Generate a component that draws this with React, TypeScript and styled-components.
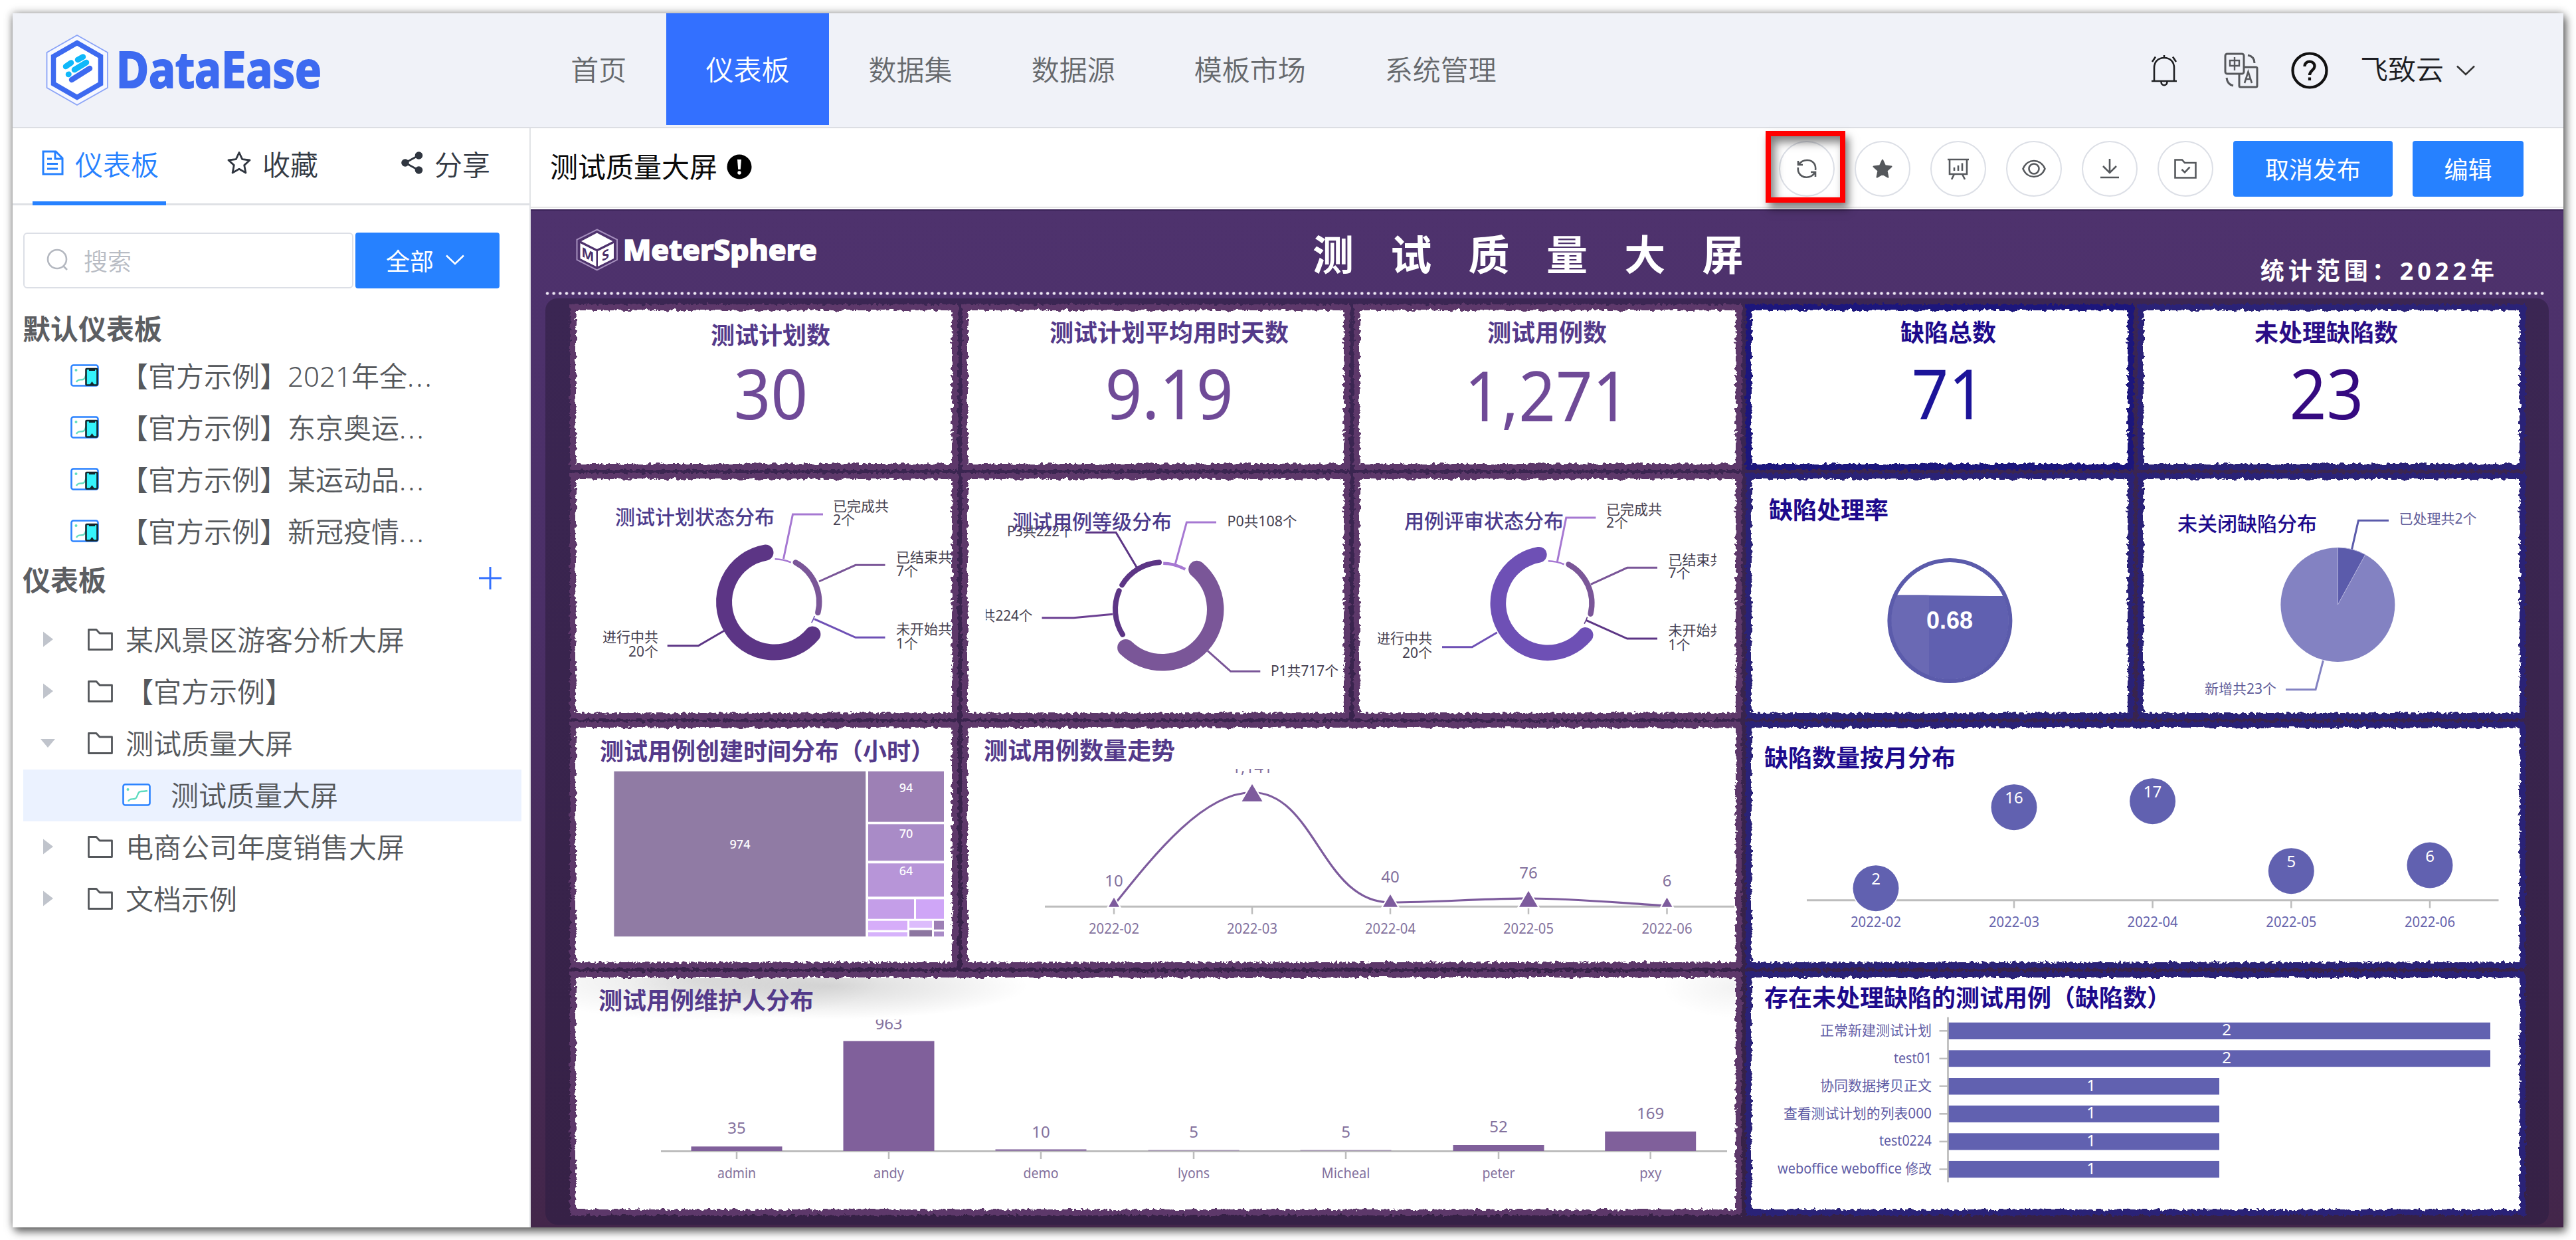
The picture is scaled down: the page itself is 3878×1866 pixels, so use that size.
import React from "react";
import styled, { createGlobalStyle } from "styled-components";

const FONT = `"Noto Sans", "Noto Sans CJK SC", sans-serif`;

const Global = createGlobalStyle`
  * { box-sizing: border-box; }
  body { margin: 0; background: #fff; font-family: ${FONT}; }
`;

/* ---------- frame ---------- */

const Page = styled.div`
  width: 3878px;
  height: 1866px;
  padding: 20px 19px 19px;
  overflow: hidden;
  background: #fff;
`;
const Frame = styled.div`
  width: 3840px;
  height: 1827px;
  display: flex;
  flex-direction: column;
  background: #fff;
  box-shadow: 0 0 12px rgba(0, 0, 0, 0.4), 4px 7px 12px rgba(0, 0, 0, 0.5);
`;
const Header = styled.header`
  height: 173px;
  flex: none;
  display: flex;
  align-items: center;
  padding: 0 133px 0 51px;
  background: #f0f2f8;
  border-bottom: 2px solid #dcdee3;
`;
const Nav = styled.nav`
  display: flex;
  align-self: flex-start;
  margin-left: 310px;
`;
const NavItem = styled.a<{ $active?: boolean }>`
  height: 168px;
  padding: 0 59.8px 4px 59.3px;
  display: flex;
  align-items: center;
  font-size: 42px;
  font-weight: 350;
  color: ${(p) => (p.$active ? "#fff" : "#66696d")};
  background: ${(p) => (p.$active ? "#3370ff" : "transparent")};
`;
const HeaderTools = styled.div`
  margin-left: auto;
  display: flex;
  align-items: center;
`;
const Tool = styled.span<{ $gap?: number }>`
  display: flex;
  margin-left: ${(p) => p.$gap ?? 0}px;
`;
const UserName = styled.span`
  margin: 0 0 4px 48px;
  font-size: 42px;
  font-weight: 350;
  line-height: 60px;
  color: #1c1d22;
`;
const Body = styled.div`
  flex: 1;
  min-height: 0;
  display: flex;
`;

/* ---------- sidebar ---------- */

const Sidebar = styled.aside`
  width: 780px;
  flex: none;
  border-right: 2px solid #e1e3e6;
`;
const Tabs = styled.div`
  height: 116px;
  display: flex;
  padding-left: 30px;
  border-bottom: 3px solid #dfe1e5;
`;
const Tab = styled.div<{ $active?: boolean; $gap?: number }>`
  height: 116px;
  display: flex;
  align-items: center;
  gap: 17px;
  margin-left: ${(p) => p.$gap ?? 0}px;
  padding: ${(p) => (p.$active ? "0 11px 6px 14px" : "0 0 6px")};
  border-bottom: 6px solid ${(p) => (p.$active ? "#2681ff" : "transparent")};
  font-size: 42px;
  font-weight: 350;
  color: ${(p) => (p.$active ? "#2681ff" : "#343a44")};
`;
const SearchRow = styled.div`
  display: flex;
  gap: 3px;
  margin: 41px 0 0 16px;
`;
const SearchBox = styled.div`
  width: 497px;
  height: 84px;
  padding: 0 0 2px 33px;
  display: flex;
  align-items: center;
  gap: 22px;
  border: 2px solid #dcdfe6;
  border-radius: 6px;
  font-size: 36px;
  font-weight: 350;
  color: #b8bcc4;
`;
const ScopeButton = styled.button`
  width: 217px;
  height: 84px;
  display: flex;
  align-items: center;
  justify-content: center;
  gap: 18px;
  padding: 0 7px 2px 0;
  border: 0;
  border-radius: 4px;
  background: #2681ff;
  color: #fff;
  font: 400 36px ${FONT};
`;
const GroupHead = styled.div<{ $top: number }>`
  display: flex;
  align-items: center;
  justify-content: space-between;
  height: 60px;
  margin: ${(p) => p.$top}px 41px 0 15px;
  font-size: 42px;
  font-weight: 700;
  color: #5c5e62;
`;
const List = styled.div<{ $top: number }>`
  margin: ${(p) => p.$top}px 12px 0 16px;
`;
const Row = styled.div<{ $indent: number; $selected?: boolean }>`
  height: 78px;
  display: flex;
  align-items: center;
  padding: 0 0 2px ${(p) => p.$indent}px;
  background: ${(p) => (p.$selected ? "#ebf2ff" : "transparent")};
  font-size: 42px;
  font-weight: 350;
  color: #55585c;
  white-space: nowrap;
`;
const RowText = styled.span<{ $gap: number }>`
  margin: 0 0 4px ${(p) => p.$gap}px;
`;
const Ellipsis = styled.span`
  letter-spacing: 3px;
`;
const CaretSlot = styled.span`
  width: 72px;
  flex: none;
  display: flex;
`;

/* ---------- workspace ---------- */

const Work = styled.main`
  flex: 1;
  min-width: 0;
  display: flex;
  flex-direction: column;
`;
const Toolbar = styled.div`
  height: 120px;
  flex: none;
  display: flex;
  align-items: center;
  padding: 3px 60px 0 29px;
  border-bottom: 2px solid #e6e6e6;
  margin-bottom: 2px;
`;
const BoardName = styled.span`
  font-size: 42px;
  font-weight: 400;
  line-height: 60px;
  color: #0a0a0a;
  margin: 0 14px 5px 0;
`;
const NameMark = styled.span`
  display: flex;
  margin-bottom: 5px;
`;
const Actions = styled.div`
  margin-left: auto;
  display: flex;
  gap: 30px;
`;
const RoundButton = styled.button`
  position: relative;
  width: 84px;
  height: 84px;
  padding: 0;
  display: flex;
  align-items: center;
  justify-content: center;
  border: 2px solid #dcdfe6;
  border-radius: 50%;
  background: #fff;
`;
const Highlight = styled.span`
  position: absolute;
  left: -22px;
  top: -17px;
  width: 120px;
  height: 108px;
  border: 8px solid #f00;
  box-shadow: 5px 9px 12px rgba(0, 0, 0, 0.5), inset 6px 9px 14px rgba(0, 0, 0, 0.5);
`;
const SolidButton = styled.button<{ $w: number }>`
  width: ${(p) => p.$w}px;
  height: 84px;
  border: 0;
  border-radius: 4px;
  background: #2681ff;
  color: #fff;
  font: 400 36px ${FONT};
`;

/* ---------- dashboard ---------- */

const Board = styled.section`
  flex: 1;
  padding: 0 22px 4px;
  display: flex;
  flex-direction: column;
  background: linear-gradient(#4e326d 0%, #4b2f67 40%, #43264a 100%);
  box-shadow: inset 0 2px 0 #3b2358;
`;
const Banner = styled.div`
  height: 124px;
  flex: none;
  display: flex;
  align-items: center;
  padding: 0 76px 0 47px;
`;
const BannerTitle = styled.h1`
  margin: 12px 0 0 744px;
  font-size: 62px;
  line-height: 80px;
  font-weight: 700;
  letter-spacing: 55.3px;
  color: #fff;
  white-space: nowrap;
`;
const Period = styled.span`
  margin: 61px 0 0 auto;
  font-size: 36px;
  line-height: 48px;
  font-weight: 700;
  letter-spacing: 6px;
  color: #fff;
  white-space: nowrap;
`;
const Dots = styled.div`
  height: 5px;
  flex: none;
  margin: 0 6px 5px 0;
  background: radial-gradient(circle at 3px 2.5px, #efe9f5 1.6px, rgba(239, 233, 245, 0) 2.8px) 0 0 / 9.66px 5px repeat-x;
`;
const Panel = styled.div`
  flex: 1;
  padding: 9px 36px 0 37px;
  border-radius: 18px;
  background: linear-gradient(#3b2653, #362146);
`;
const Grid = styled.div`
  display: grid;
  grid-template-columns: repeat(5, 584px);
  grid-template-rows: 249px 370px 371px 367px;
  column-gap: 6px;
  row-gap: 4.5px;
`;
const Card = styled.article<{ $tone: string; $span?: number }>`
  position: relative;
  z-index: 0;
  min-width: 0;
  display: grid;
  grid-template: 100% / 100%;
  grid-column: span ${(p) => p.$span ?? 1};
  &::before {
    content: "";
    position: absolute;
    z-index: -1;
    inset: 0;
    border: 9.5px solid ${(p) => p.$tone};
    background: #fff;
    filter: url(#torn);
  }
`;
const Smudge = styled.div`
  grid-area: 1 / 1;
  margin: 10px;
  background: radial-gradient(ellipse 300px 50px at 380px 12px, rgba(0, 0, 0, 0.15), rgba(0, 0, 0, 0.08) 50%, transparent),
    radial-gradient(ellipse 280px 60px at 180px 4px, rgba(0, 0, 0, 0.1), transparent),
    radial-gradient(ellipse 110px 46px at 100% 14px, rgba(0, 0, 0, 0.05), transparent);
`;
const CardTitle = styled.h2<{ $x: number; $y: number; $size?: number; $color: string; $weight?: number }>`
  grid-area: 1 / 1;
  justify-self: start;
  align-self: start;
  z-index: 1;
  margin: ${(p) => p.$y - 25}px 0 0 ${(p) => p.$x}px;
  font-size: ${(p) => p.$size ?? 36}px;
  line-height: 48px;
  font-weight: ${(p) => p.$weight ?? 700};
  color: ${(p) => p.$color};
  white-space: nowrap;
`;
const Chart = styled.svg`
  grid-area: 1 / 1;
  width: 100%;
  height: 100%;
  display: block;
`;
const Kpi = styled.div<{ $shift: number; $top: number }>`
  grid-area: 1 / 1;
  display: flex;
  flex-direction: column;
  align-items: center;
  padding: ${(p) => p.$top}px 0 0 0;
  margin-left: ${(p) => p.$shift * 2}px;
`;
const KpiLabel = styled.span<{ $color: string }>`
  font-size: 36px;
  line-height: 48px;
  font-weight: 700;
  color: ${(p) => p.$color};
  white-space: nowrap;
`;
const KpiValue = styled.span<{ $color: string; $gap: number }>`
  margin-top: ${(p) => p.$gap}px;
  font-size: 104px;
  line-height: 100px;
  font-weight: 400;
  transform: scaleX(0.935);
  color: ${(p) => p.$color};
`;

/* ---------- chart primitives ---------- */

const MAUVE = "#5d376a";
const NAVY = "#2b2277";

type LabelProps = {
  x: number;
  y: number;
  size?: number;
  fill?: string;
  anchor?: "start" | "middle" | "end";
  weight?: number;
  font?: string;
  width?: number;
  children: React.ReactNode;
};
const Label = ({ x, y, size = 21, fill = "#45404f", anchor = "start", weight = 400, font = FONT, width, children }: LabelProps) => (
  <text
    x={x}
    y={y + size * 0.365}
    fontSize={size}
    fill={fill}
    textAnchor={anchor}
    fontWeight={weight}
    fontFamily={font}
    textLength={width}
    lengthAdjust={width ? "spacingAndGlyphs" : undefined}
  >
    {children}
  </text>
);

const polar = (cx: number, cy: number, r: number, deg: number) => {
  const a = ((deg - 90) * Math.PI) / 180;
  return `${(cx + r * Math.cos(a)).toFixed(2)} ${(cy + r * Math.sin(a)).toFixed(2)}`;
};

const Ring = ({ cx, cy, inner, thick, from, to, color }: { cx: number; cy: number; inner: number; thick: number; from: number; to: number; color: string }) => {
  const r = inner + thick / 2;
  const pad = thick < 5 ? 1 : (Math.asin(thick / 2 / r) * 180) / Math.PI + 0.8;
  const a = from + pad;
  const b = to - pad;
  return (
    <path
      d={`M${polar(cx, cy, r, a)} A${r} ${r} 0 ${b - a > 180 ? 1 : 0} 1 ${polar(cx, cy, r, b)}`}
      fill="none"
      stroke={color}
      strokeWidth={thick}
      strokeLinecap={thick < 5 ? "butt" : "round"}
    />
  );
};
const Leader = ({ points, color }: { points: string; color: string }) => <polyline points={points} fill="none" stroke={color} strokeWidth={3} />;

const StatusDonut = ({ main, minor }: { main: string; minor: string }) => (
  <>
    <Ring cx={0} cy={0} inner={63.5} thick={2.6} from={0} to={24} color="#a678d2" />
    <Ring cx={0} cy={0} inner={63.5} thick={8.4} from={24} to={108} color="#7a5698" />
    <Ring cx={0} cy={0} inner={63.5} thick={1.6} from={108} to={120} color={minor} />
    <Ring cx={0} cy={0} inner={63.5} thick={24} from={120} to={360} color={main} />
  </>
);

const months = ["2022-02", "2022-03", "2022-04", "2022-05", "2022-06"];
const trend = [
  { x: 1677, top: 1350.7, bottom: 1364.7, half: 8, v: "10", vy: 1325 },
  { x: 1885, top: 1180, bottom: 1206, half: 15.5, v: "1,141", vy: 1154 },
  { x: 2093, top: 1346, bottom: 1364.7, half: 11, v: "40", vy: 1319.3 },
  { x: 2301, top: 1340.7, bottom: 1364.7, half: 14, v: "76", vy: 1313.3 },
  { x: 2509.5, top: 1350.7, bottom: 1364.7, half: 8, v: "6", vy: 1325 },
];
const bubbles = [
  { x: 2824, y: 1336.7, v: 2 },
  { x: 3032, y: 1214.7, v: 16 },
  { x: 3240.6, y: 1205.7, v: 17 },
  { x: 3449.3, y: 1310.7, v: 5 },
  { x: 3658, y: 1302, v: 6 },
];
const keepers = [
  { n: "admin", v: 35, x: 1109, top: 1725.3, vy: 1697.7, w: 58 },
  { n: "andy", v: 963, x: 1338, top: 1566.7, vy: 1540, w: 46 },
  { n: "demo", v: 10, x: 1567, top: 1729.3, vy: 1703, w: 53, o: 0.75 },
  { n: "lyons", v: 5, x: 1797, top: 1730.3, vy: 1703, w: 48, o: 0.4 },
  { n: "Micheal", v: 5, x: 2026, top: 1730.3, vy: 1703, w: 73, o: 0.4 },
  { n: "peter", v: 52, x: 2256, top: 1723, vy: 1695, w: 49 },
  { n: "pxy", v: 169, x: 2484.7, top: 1702.7, vy: 1675.7, w: 33 },
];
const openCases = [
  { n: "正常新建测试计划", v: 2, w: 168 },
  { n: "test01", v: 2, w: 57 },
  { n: "协同数据拷贝正文", v: 1, w: 168 },
  { n: "查看测试计划的列表000", v: 1, w: 223 },
  { n: "test0224", v: 1, w: 79 },
  { n: "weboffice weboffice 修改", v: 1, w: 232 },
];
const tiles = [
  [924.4, 1160.7, 1303.2, 1409.3, "#907ba4"],
  [1307, 1160.7, 1421, 1236.7, "#9d80b5"],
  [1307, 1240.3, 1421, 1295.3, "#a98bc7"],
  [1307, 1299.3, 1421, 1349.3, "#b795d8"],
  [1307, 1353.3, 1376, 1382.7, "#c49ee8"],
  [1379, 1353.3, 1421, 1382.7, "#cfa6f7"],
  [1307, 1385.7, 1366, 1399.7, "#d6adf9"],
  [1307, 1403, 1366, 1409.3, "#d6b2fb"],
  [1369, 1385.7, 1403, 1396, "#dcbcfc"],
  [1369, 1399.7, 1403, 1409.3, "#8c76a0"],
  [1406, 1385.7, 1421, 1398.7, "#9d80b5"],
  [1406, 1401.7, 1421, 1409.3, "#a98bc7"],
] as const;
const kpis = [
  { t: "测试计划数", v: "30", shift: 10, top: 23, gap: 12, tone: MAUVE, c: "#543a8a", n: "#6f4a97" },
  { t: "测试计划平均用时天数", v: "9.19", shift: 20, top: 19, gap: 16, tone: MAUVE, c: "#543a8a", n: "#6f4a97" },
  { t: "测试用例数", v: "1,271", shift: -1, top: 19, gap: 19, tone: MAUVE, c: "#543a8a", n: "#6f4a97" },
  { t: "缺陷总数", v: "71", shift: 13, top: 19, gap: 16, tone: "#1c177c", c: "#1d0a8c", n: "#1c1499" },
  { t: "未处理缺陷数", v: "23", shift: -8, top: 19, gap: 16, tone: NAVY, c: "#2a0d86", n: "#350a80" },
];

/* ---------- icons ---------- */

const DataEaseLogo = () => (
  <svg width="420" height="110" viewBox="70 50 420 110" overflow="visible">
    <path d="M116 52 L162 78 V131 L116 157 L70.500 131 V78Z" fill="#f6f8ff" stroke="#8aa3f7" strokeWidth="1.800" />
    <path d="M116 63.500 L151.500 84 V125 L116 145.500 L80.500 125 V84Z" fill="#fff" stroke="#3d6af0" strokeWidth="7.500" />
    <g strokeWidth="8.500" strokeLinecap="round">
      <path d="M99 99 L107 93.500 M117 89 L125 84.500 M112 104 L130 93 M103 111 L103.500 110.700" stroke="#0fb8fa" />
      <path d="M108 119 L135 102" stroke="#3d6af0" />
    </g>
    <text x="175" y="130.500" fontSize="76" fontWeight="700" fill="#3d6af0" stroke="#3d6af0" strokeWidth="2.200" fontFamily={FONT} textLength="309" lengthAdjust="spacingAndGlyphs">
      DataEase
    </text>
  </svg>
);
const MeterLogo = () => (
  <svg width="364" height="66" viewBox="868 344 364 66" overflow="visible">
    <path d="M898.700 345.500 L929 360.500 V391 L898.700 406.500 L868.500 391 V360.500Z" fill="none" stroke="#a58fbd" strokeWidth="2" />
    <path d="M898.700 350.500 L922.500 363 L898.700 375 L875 363Z M873.500 366 L897.500 378 V401 L873.500 389Z M924 366 L900 378 V401 L924 389Z" fill="#fff" />
    <text transform="matrix(1 .5 0 1 875.500 385.500)" fontSize="20" fontWeight="700" fill="#4b306a" fontFamily={FONT}>M</text>
    <text transform="matrix(1 -.5 0 1 906 393.500)" fontSize="20" fontWeight="700" fill="#4b306a" fontFamily={FONT}>S</text>
    <text x="938" y="392" fontSize="42" fontWeight="800" fill="#fff" stroke="#fff" strokeWidth="1.600" fontFamily={FONT} textLength="292" lengthAdjust="spacingAndGlyphs">
      MeterSphere
    </text>
  </svg>
);
const Bell = () => (
  <svg width="40" height="48" viewBox="0 0 40 48" fill="none" stroke="#1f2023" strokeWidth="2.600">
    <path d="M20 1 V5 M5 40 V20 C5 11 11 5 20 5 C29 5 35 11 35 20 V40 M1 40 H39 M15.500 41 C15.500 48 24.500 48 24.500 41 M7 3.500 L2 11 M33 3.500 L38 11" />
  </svg>
);
const Translate = () => (
  <svg width="52" height="54" viewBox="0 0 52 54" fill="none" stroke="#56585c" strokeWidth="3">
    <rect x="2" y="2" width="28" height="30" rx="3" />
    <path d="M23 32 V50 Q23 52 25 52 H48 Q50 52 50 50 V24 Q50 22 48 22 H30" />
    <path d="M36 4 Q46 6 46 16 M4 38 Q5 48 14 50" />
    <path d="M9 12 H23 V20 H9Z M16 7 V27" strokeWidth="2.400" />
    <path d="M31 46 L36.500 29 L42 46 M33 40 H40" strokeWidth="2.600" />
  </svg>
);
const Help = () => (
  <svg width="56" height="56" viewBox="0 0 56 56" fill="none" stroke="#111" strokeWidth="4.200">
    <circle cx="28" cy="28" r="25.500" />
    <path d="M20.500 22 C20.500 12 36 12.500 35.500 22 C35 28 28 28 28 35" />
    <path d="M28 38.500 V43" />
  </svg>
);
const Chevron = ({ color, w = 28 }: { color: string; w?: number }) => (
  <svg width={w} height="16" viewBox="0 0 28 16" fill="none" stroke={color} strokeWidth="2.600">
    <path d="M1 1.500 L14 14 L27 1.500" />
  </svg>
);
const DocIcon = () => (
  <svg width="33" height="38" viewBox="0 0 33 38" fill="none" stroke="#2681ff" strokeWidth="3">
    <path d="M2 2 H21 L31 12 V36 H2Z M20 2 V13 H31 M8 13 H15 M8 20.500 H24 M8 28 H24" />
  </svg>
);
const StarIcon = ({ size, fill = "none", color }: { size: number; fill?: string; color: string }) => (
  <svg width={size} height={size} viewBox="0 0 36 36" fill={fill} stroke={color} strokeWidth="2.800" strokeLinejoin="round">
    <path d="M18 2.500 L22.700 12.600 L34 14 L25.700 21.600 L27.900 33 L18 27.300 L8.100 33 L10.300 21.600 L2 14 L13.300 12.600Z" />
  </svg>
);
const ShareIcon = () => (
  <svg width="33" height="34" viewBox="0 0 33 34" fill="#303640" stroke="#303640" strokeWidth="2.800">
    <path d="M26 6 L6 17 L26 28" fill="none" />
    <circle cx="26.500" cy="6" r="4.400" />
    <circle cx="6" cy="17" r="4.400" />
    <circle cx="26.500" cy="28" r="4.400" />
  </svg>
);
const SearchIcon = () => (
  <svg width="34" height="34" viewBox="0 0 34 34" fill="none" stroke="#b4b8c0" strokeWidth="2.600">
    <circle cx="16" cy="16" r="14" />
    <path d="M25 26 L31 32" />
  </svg>
);
const BoardIcon = ({ phone }: { phone?: boolean }) => (
  <svg width="43" height="34" viewBox="0 0 43 34" fill="none">
    <rect x="1.500" y="1.500" width="40" height="31" rx="3" fill="#fff" stroke="#2b83ff" strokeWidth="2.600" />
    <circle cx="8.500" cy="9" r="2" fill="#5fdcc0" />
    <path d="M9 27 C11 22 15 24 19 23 C24 22 22 12 28 12 C33 12 33 12 38 11" stroke="#5fdcc0" strokeWidth="2.400" />
    {phone && (
      <>
        <rect x="23.500" y="7" width="17" height="24.500" rx="1" fill="#35f3fb" stroke="#14262c" strokeWidth="2.600" />
        <path d="M28 7 H37 V10 H28Z M29 31 L32.500 26 L36 31Z" fill="#14262c" />
      </>
    )}
  </svg>
);
const Folder = () => (
  <svg width="38" height="33" viewBox="0 0 38 33" fill="none" stroke="#54575b" strokeWidth="2.800" strokeLinejoin="round">
    <path d="M1.500 1.500 H13 L18 7 H36.500 V31.500 H1.500Z" />
  </svg>
);
const Caret = ({ open }: { open?: boolean }) => (
  <svg width="24" height="24" viewBox="0 0 24 24" fill="#c0c4cc">
    <path d={open ? "M1 6 H23 L12 19Z" : "M5 0.500 L20 12 L5 23.500Z"} />
  </svg>
);
const Plus = () => (
  <svg width="36" height="36" viewBox="0 0 36 36" stroke="#3370ff" strokeWidth="3">
    <path d="M1 18 H35 M18 1 V35" />
  </svg>
);
const InfoDot = () => (
  <svg width="38" height="38" viewBox="0 0 38 38">
    <circle cx="19" cy="19" r="18.500" fill="#000" />
    <path d="M16 8 H22 L20.800 23 H17.200Z" fill="#fff" />
    <circle cx="19" cy="28" r="2.700" fill="#fff" />
  </svg>
);
const G = "#55585c";
const Refresh = () => (
  <svg width="32" height="32" viewBox="0 0 32 32" fill="none" stroke={G} strokeWidth="2.600">
    <path d="M3 4 V10 H10 M4 9.500 C10 1 23 0.500 28 9.500 C29 12 29.500 15 29 18" />
    <path d="M29 28 V21 H22 M28 22 C22 31 9 31 4 22 C3 20 2.500 17 3 14" />
  </svg>
);
const Present = () => (
  <svg width="34" height="34" viewBox="0 0 34 34" fill="none" stroke={G} strokeWidth="2.600">
    <path d="M1 3 H33 M4 3 V25 H30 V3 M11 25 L7 33 M23 25 L27 33 M11 15 V20 M17 12 V20 M23 8.500 V20" />
  </svg>
);
const Eye = () => (
  <svg width="36" height="28" viewBox="0 0 36 28" fill="none" stroke={G} strokeWidth="2.600">
    <path d="M1.500 14 C8 -2 28 -2 34.500 14 C28 30 8 30 1.500 14Z" />
    <circle cx="18" cy="14" r="7.500" />
  </svg>
);
const Download = () => (
  <svg width="30" height="30" viewBox="0 0 30 30" fill="none" stroke={G} strokeWidth="2.600">
    <path d="M15 0 V20 M5 11 L15 21 L25 11 M1 28 H29" />
  </svg>
);
const FolderCheck = () => (
  <svg width="34" height="30" viewBox="0 0 34 30" fill="none" stroke={G} strokeWidth="2.600">
    <path d="M1.500 1.500 H12 L16 6 H32.500 V28.500 H1.500Z M11.500 16 L16 20.500 L23.500 12.500" />
  </svg>
);

const vb = (x: number, y: number, w: number, h: number) => `${x} ${y} ${w} ${h}`;

export default function App() {
  return (
    <Page>
      <Global />
      <svg width="0" height="0" style={{ display: "block" }}>
        <filter id="torn" x="-2%" y="-2%" width="104%" height="104%">
          <feTurbulence type="fractalNoise" baseFrequency="0.16" numOctaves="3" seed="4" />
          <feDisplacementMap in="SourceGraphic" scale="9" xChannelSelector="R" yChannelSelector="G" />
        </filter>
      </svg>
      <Frame>
        <Header>
          <DataEaseLogo />
          <Nav>
            <NavItem>首页</NavItem>
            <NavItem $active>仪表板</NavItem>
            <NavItem>数据集</NavItem>
            <NavItem>数据源</NavItem>
            <NavItem>模板市场</NavItem>
            <NavItem>系统管理</NavItem>
          </Nav>
          <HeaderTools>
            <Tool><Bell /></Tool>
            <Tool $gap={70}><Translate /></Tool>
            <Tool $gap={49}><Help /></Tool>
            <UserName>飞致云</UserName>
            <Tool $gap={19}><Chevron color="#333" /></Tool>
          </HeaderTools>
        </Header>
        <Body>
          <Sidebar>
            <Tabs>
              <Tab $active><DocIcon />仪表板</Tab>
              <Tab $gap={92}><StarIcon size={36} color="#303640" />收藏</Tab>
              <Tab $gap={125}><ShareIcon />分享</Tab>
            </Tabs>
            <SearchRow>
              <SearchBox><SearchIcon />搜索</SearchBox>
              <ScopeButton>全部<Chevron color="#fff" /></ScopeButton>
            </SearchRow>
            <GroupHead $top={28}>默认仪表板</GroupHead>
            <List $top={5}>
              {["2021年全", "东京奥运", "某运动品", "新冠疫情"].map((t) => (
                <Row key={t} $indent={71}>
                  <BoardIcon phone />
                  <RowText $gap={32}>【官方示例】{t}<Ellipsis>...</Ellipsis></RowText>
                </Row>
              ))}
            </List>
            <GroupHead $top={1}>仪表板<Plus /></GroupHead>
            <List $top={24}>
              <Row $indent={25}><CaretSlot><Caret /></CaretSlot><Folder /><RowText $gap={19}>某风景区游客分析大屏</RowText></Row>
              <Row $indent={25}><CaretSlot><Caret /></CaretSlot><Folder /><RowText $gap={19}>【官方示例】</RowText></Row>
              <Row $indent={25}><CaretSlot><Caret open /></CaretSlot><Folder /><RowText $gap={19}>测试质量大屏</RowText></Row>
              <Row $indent={149} $selected><BoardIcon /><RowText $gap={30}>测试质量大屏</RowText></Row>
              <Row $indent={25}><CaretSlot><Caret /></CaretSlot><Folder /><RowText $gap={19}>电商公司年度销售大屏</RowText></Row>
              <Row $indent={25}><CaretSlot><Caret /></CaretSlot><Folder /><RowText $gap={19}>文档示例</RowText></Row>
            </List>
          </Sidebar>
          <Work>
            <Toolbar>
              <BoardName>测试质量大屏</BoardName>
              <NameMark><InfoDot /></NameMark>
              <Actions>
                <RoundButton><Refresh /><Highlight /></RoundButton>
                <RoundButton><StarIcon size={30} fill={G} color={G} /></RoundButton>
                <RoundButton><Present /></RoundButton>
                <RoundButton><Eye /></RoundButton>
                <RoundButton><Download /></RoundButton>
                <RoundButton><FolderCheck /></RoundButton>
                <SolidButton $w={240}>取消发布</SolidButton>
                <SolidButton $w={167}>编辑</SolidButton>
              </Actions>
            </Toolbar>
            <Board>
              <Banner>
                <MeterLogo />
                <BannerTitle>测试质量大屏</BannerTitle>
                <Period>统计范围：2022年</Period>
              </Banner>
              <Dots />
              <Panel>
                <Grid>
                  {kpis.map((k) => (
                    <Card key={k.t} $tone={k.tone}>
                      <Kpi $shift={k.shift} $top={k.top}>
                        <KpiLabel $color={k.c}>{k.t}</KpiLabel>
                        <KpiValue $color={k.n} $gap={k.gap}>{k.v}</KpiValue>
                      </Kpi>
                    </Card>
                  ))}

                  <Card $tone={MAUVE}>
                    <CardTitle $x={68} $y={67} $size={30} $color="#4b3a8c" $weight={500}>测试计划状态分布</CardTitle>
                    <Chart viewBox={vb(858, 711, 584, 370)}>
                      <defs><clipPath id="c1"><rect x="866" y="711" width="567" height="370" /></clipPath></defs>
                      <g transform="translate(1165.5 905)"><StatusDonut main="#5c3585" minor="#6e50b5" /></g>
                      <Leader points="1179.500,840 1193.500,773 1239,773" color="#a678d2" />
                      <Leader points="1233,874 1288,849.300 1332.500,849.300" color="#7a5698" />
                      <Leader points="1226,930.700 1288,958.300 1332.500,958.300" color="#6e50b5" />
                      <Leader points="1090,948.300 1051.300,970.700 1004.700,970.700" color="#5c3585" />
                      <g clipPath="url(#c1)">
                        <Label x={1254} y={760.7}>已完成共</Label>
                        <Label x={1254} y={781.7}>2个</Label>
                        <Label x={1349} y={837}>已结束共</Label>
                        <Label x={1349} y={858}>7个</Label>
                        <Label x={1349} y={945}>未开始共</Label>
                        <Label x={1349} y={967}>1个</Label>
                        <Label x={991} y={957.7} anchor="end">进行中共</Label>
                        <Label x={991} y={979} anchor="end">20个</Label>
                      </g>
                    </Chart>
                  </Card>

                  <Card $tone={MAUVE}>
                    <CardTitle $x={76} $y={74} $size={30} $color="#4b3a8c" $weight={500}>测试用例等级分布</CardTitle>
                    <Chart viewBox={vb(1448, 711, 584, 370)}>
                      <defs>
                        <clipPath id="c2"><rect x="1484" y="711" width="540" height="370" /></clipPath>
                        <clipPath id="c2b"><rect x="1484" y="789.500" width="540" height="200" /></clipPath>
                      </defs>
                      <Ring cx={1750} cy={916} inner={67} thick={4.5} from={0} to={30.6} color="#a678d2" />
                      <Ring cx={1750} cy={916} inner={67} thick={25.5} from={30.6} to={233.7} color="#7a5698" />
                      <Ring cx={1750} cy={916} inner={67} thick={8} from={233.7} to={297.1} color="#5c3585" />
                      <Ring cx={1750} cy={916} inner={67} thick={8} from={297.1} to={360} color="#5c3585" />
                      <Leader points="1712,854 1680,800.300 1634,800.300" color="#5c3585" />
                      <Leader points="1769,849 1786.400,785 1831,785" color="#a678d2" />
                      <Leader points="1675,923.300 1616.300,928.700 1568.500,928.700" color="#6b3f92" />
                      <Leader points="1818,978.300 1852.700,1009.300 1897.300,1009.300" color="#7a5698" />
                      <g clipPath="url(#c2b)"><Label x={1615} y={798} anchor="end" width={99}>P3共222个</Label></g>
                      <g clipPath="url(#c2)">
                        <Label x={1847.6} y={783.3} width={105}>P0共108个</Label>
                        <Label x={1554.5} y={925.7} anchor="end" width={101}>P2共224个</Label>
                        <Label x={1913} y={1008} width={102}>P1共717个</Label>
                      </g>
                    </Chart>
                  </Card>

                  <Card $tone={MAUVE}>
                    <CardTitle $x={76} $y={73} $size={30} $color="#4b3a8c" $weight={500}>用例评审状态分布</CardTitle>
                    <Chart viewBox={vb(2038, 711, 584, 370)}>
                      <defs><clipPath id="c3"><rect x="2074.500" y="711" width="509.500" height="370" /></clipPath></defs>
                      <g transform="translate(2329.700 907) scale(.985)"><StatusDonut main="#6e50b5" minor="#5c3585" /></g>
                      <Leader points="2344.400,844 2357.800,778 2402.400,778" color="#a678d2" />
                      <Leader points="2394.800,878.300 2449.600,853.300 2495,853.300" color="#7a5698" />
                      <Leader points="2387.800,932.300 2449.600,960 2495,960" color="#5c3585" />
                      <Leader points="2253.800,950.700 2216.200,972.700 2171,972.700" color="#6e50b5" />
                      <g clipPath="url(#c3)">
                        <Label x={2418} y={765}>已完成共</Label>
                        <Label x={2418} y={785.7}>2个</Label>
                        <Label x={2511.5} y={841.7}>已结束共</Label>
                        <Label x={2511.5} y={861.7}>7个</Label>
                        <Label x={2511.5} y={947}>未开始共</Label>
                        <Label x={2511.5} y={969}>1个</Label>
                        <Label x={2156} y={959.3} anchor="end">进行中共</Label>
                        <Label x={2156} y={981.7} anchor="end">20个</Label>
                      </g>
                    </Chart>
                  </Card>

                  <Card $tone={NAVY}>
                    <CardTitle $x={35} $y={57} $color="#1d0a8c">缺陷处理率</CardTitle>
                    <Chart viewBox={vb(2628, 711, 584, 370)}>
                      <defs><clipPath id="liq"><circle cx="2935.400" cy="933" r="88.500" /></clipPath></defs>
                      <g clipPath="url(#liq)">
                        <path d="M2840 895 C2890 893.500 2960 896.500 3032 896 V1030 H2840Z" fill="#6060b0" />
                        <path d="M2840 895 C2865 894.300 2890 894.500 2904 894.700 V1030 H2840Z" fill="#6a69b4" />
                      </g>
                      <circle cx="2935.400" cy="933" r="91" fill="none" stroke="#5b5bab" strokeWidth="6" />
                      <Label x={2935} y={932} size={36} weight={700} fill="#fff" anchor="middle" font={`"Liberation Sans", sans-serif`}>0.68</Label>
                    </Chart>
                  </Card>

                  <Card $tone={NAVY}>
                    <CardTitle $x={60} $y={77} $size={30} $color="#1d0a8c" $weight={500}>未关闭缺陷分布</CardTitle>
                    <Chart viewBox={vb(3218, 711, 584, 370)}>
                      <circle cx="3519.400" cy="909" r="86" fill="#8382c2" />
                      <path d={`M3519.400 909 L${polar(3519.4, 909, 86, 0)} A86 86 0 0 1 ${polar(3519.4, 909, 86, 28.8)}Z`} fill="#5b5bab" stroke="#b9b8de" strokeWidth="1" />
                      <Leader points="3540.600,825.300 3550.400,782.300 3596,782.300" color="#5b5bab" />
                      <Leader points="3497.400,993 3486,1036.700 3441,1036.700" color="#8382c2" />
                      <Label x={3611.5} y={779} fill="#5f5c99">已处理共2个</Label>
                      <Label x={3427} y={1035.3} fill="#5f5c99" anchor="end">新增共23个</Label>
                    </Chart>
                  </Card>

                  <Card $tone={MAUVE}>
                    <CardTitle $x={45} $y={46} $color="#543a8a">测试用例创建时间分布（小时）</CardTitle>
                    <Chart viewBox={vb(858, 1086, 584, 371)}>
                      {tiles.map(([x1, y1, x2, y2, c]) => (
                        <rect key={`${x1}-${y1}`} x={x1} y={y1} width={x2 - x1} height={y2 - y1} fill={c} />
                      ))}
                      <Label x={1114} y={1270.7} size={18} weight={500} fill="#fff" anchor="middle">974</Label>
                      <Label x={1364} y={1185.7} size={18} weight={500} fill="#fff" anchor="middle">94</Label>
                      <Label x={1364} y={1254.3} size={18} weight={500} fill="#fff" anchor="middle">70</Label>
                      <Label x={1364} y={1310} size={18} weight={500} fill="#fff" anchor="middle">64</Label>
                    </Chart>
                  </Card>

                  <Card $tone={MAUVE} $span={2}>
                    <CardTitle $x={33} $y={45} $color="#543a8a">测试用例数量走势</CardTitle>
                    <Chart viewBox={vb(1448, 1086, 1174, 371)}>
                      <defs><clipPath id="c4"><rect x="1448" y="1157" width="1174" height="300" /></clipPath></defs>
                      <path d="M1573 1364.300 H2611" stroke="#bdbdbd" strokeWidth="3" />
                      <path
                        d="M1677 1362 C1740 1283 1812 1193 1885 1192.500 C1980 1193 1990 1358 2093 1358 C2163 1358 2230 1352 2301 1352 C2370 1352 2440 1359 2509 1363"
                        fill="none" stroke="#7d5b9d" strokeWidth="3.200"
                      />
                      <g clipPath="url(#c4)">
                        {trend.map((p, i) => (
                          <g key={p.x}>
                            <path d={`M${p.x} 1364 V1375.700`} stroke="#bdbdbd" strokeWidth="2.500" />
                            <path d={`M${p.x} ${p.top} L${p.x + p.half} ${p.bottom} H${p.x - p.half}Z`} fill="#7d5b9d" stroke="#fff" strokeWidth="4" paintOrder="stroke" />
                            <Label x={p.x} y={p.vy} size={24} fill="#83719d" anchor="middle">{p.v}</Label>
                            <Label x={p.x} y={1397.7} size={21} width={76} fill="#83719d" anchor="middle">{months[i]}</Label>
                          </g>
                        ))}
                      </g>
                    </Chart>
                  </Card>

                  <Card $tone={NAVY} $span={2}>
                    <CardTitle $x={28} $y={56} $color="#1d0a8c">缺陷数量按月分布</CardTitle>
                    <Chart viewBox={vb(2628, 1086, 1174, 371)}>
                      <path d="M2720 1354.700 H3761.500" stroke="#bdbdbd" strokeWidth="3" />
                      {bubbles.map((b, i) => (
                        <g key={b.x}>
                          <path d={`M${b.x} 1354 V1366.500`} stroke="#bdbdbd" strokeWidth="2.500" />
                          <circle cx={b.x} cy={b.y} r="34.500" fill="#6161b0" stroke="#fff" strokeWidth="3" paintOrder="stroke" />
                          <Label x={b.x} y={b.y - 14} size={24} fill="#fff" anchor="middle">{b.v}</Label>
                          <Label x={b.x} y={1387.7} size={21} width={76} fill="#6663ac" anchor="middle">{months[i]}</Label>
                        </g>
                      ))}
                    </Chart>
                  </Card>

                  <Card $tone={MAUVE} $span={3}>
                    <Smudge />
                    <CardTitle $x={43} $y={45} $color="#543a8a">测试用例维护人分布</CardTitle>
                    <Chart viewBox={vb(858, 1462, 1764, 367)}>
                      <defs><clipPath id="c5"><rect x="858" y="1534.500" width="1764" height="290" /></clipPath></defs>
                      <path d="M995 1732.500 H2600" stroke="#bdbdbd" strokeWidth="3" />
                      <g clipPath="url(#c5)">
                        {keepers.map((k) => (
                          <g key={k.n}>
                            <rect x={k.x - 68.5} y={k.top} width="137" height={1732 - k.top} fill="#80609b" opacity={k.o ?? 1} />
                            <path d={`M${k.x} 1732 V1744`} stroke="#bdbdbd" strokeWidth="2.500" />
                            <Label x={k.x} y={k.vy} size={24} fill="#83719d" anchor="middle">{k.v}</Label>
                            <Label x={k.x} y={1765.5} size={21} width={k.w} fill="#83719d" anchor="middle">{k.n}</Label>
                          </g>
                        ))}
                      </g>
                    </Chart>
                  </Card>

                  <Card $tone={NAVY} $span={2}>
                    <CardTitle $x={28} $y={41} $color="#1d0a8c">存在未处理缺陷的测试用例（缺陷数）</CardTitle>
                    <Chart viewBox={vb(2628, 1462, 1174, 367)}>
                      {openCases.map((c, i) => {
                        const y = 1538.7 + i * 41.65;
                        const w = c.v === 2 ? 816.5 : 408.5;
                        return (
                          <g key={c.n}>
                            <rect x="2932.500" y={y} width={w} height="25.300" fill="#6161b0" />
                            <path d={`M2919.500 ${y + 12.6} H2932`} stroke="#bdbdbd" strokeWidth="2.500" />
                            <Label x={2908} y={y + 11.5} width={c.w} fill="#5f5ca5" anchor="end">{c.n}</Label>
                            <Label x={c.v === 2 ? 3352 : 3148} y={y + 11} size={24} fill="#fff" anchor="middle">{c.v}</Label>
                          </g>
                        );
                      })}
                      <path d="M2932.500 1530.700 V1779.300" stroke="#b5b5b5" strokeWidth="2.500" />
                    </Chart>
                  </Card>
                </Grid>
              </Panel>
            </Board>
          </Work>
        </Body>
      </Frame>
    </Page>
  );
}
